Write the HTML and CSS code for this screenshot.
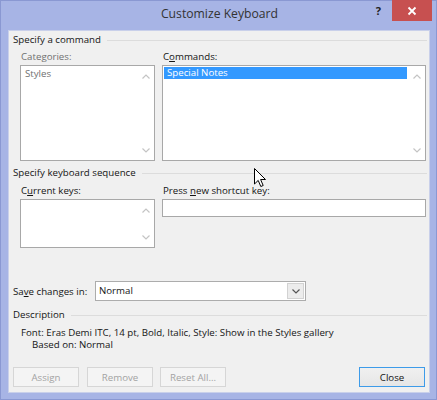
FILE: index.html
```html
<!DOCTYPE html>
<html>
<head>
<meta charset="utf-8">
<link rel="stylesheet" href="styles.css">
</head>
<body>
<div class="window">
  <div class="titlebar">
    <div class="title">Customize Keyboard</div>
    <div class="controls">
      <span class="help">?</span>
      <span class="close"><svg width="10" height="10" viewBox="0 0 10 10"><path d="M1.5 1.5 L8.5 8.5 M8.5 1.5 L1.5 8.5" stroke="#fff" stroke-width="1.8"/></svg></span>
    </div>
  </div>
  <div class="client">
    <div class="group-title">Specify a command</div>
    <div class="cols cmd-cols">
      <div class="col left">
        <div class="label disabled">Categories:</div>
        <div class="listbox tall">
          <div class="items"><div class="item gray">Styles</div></div>
          <div class="scroll">
            <svg width="8" height="5" viewBox="0 0 8 5"><path d="M0.5 4.5 L4 1 L7.5 4.5" fill="none" stroke="#c4c4c4" stroke-width="1.2"/></svg>
            <svg width="8" height="5" viewBox="0 0 8 5"><path d="M0.5 0.5 L4 4 L7.5 0.5" fill="none" stroke="#c4c4c4" stroke-width="1.2"/></svg>
          </div>
        </div>
      </div>
      <div class="col right">
        <div class="label">C<u>o</u>mmands:</div>
        <div class="listbox tall">
          <div class="items"><div class="item selected">Special Notes</div></div>
          <div class="scroll">
            <svg width="8" height="5" viewBox="0 0 8 5"><path d="M0.5 4.5 L4 1 L7.5 4.5" fill="none" stroke="#c4c4c4" stroke-width="1.2"/></svg>
            <svg width="8" height="5" viewBox="0 0 8 5"><path d="M0.5 0.5 L4 4 L7.5 0.5" fill="none" stroke="#c4c4c4" stroke-width="1.2"/></svg>
          </div>
        </div>
      </div>
    </div>
    <div class="group-title g2">Specify keyboard sequence</div>
    <div class="cols keys-cols">
      <div class="col left">
        <div class="label">C<u>u</u>rrent keys:</div>
        <div class="listbox short">
          <div class="items"></div>
          <div class="scroll">
            <svg width="8" height="5" viewBox="0 0 8 5"><path d="M0.5 4.5 L4 1 L7.5 4.5" fill="none" stroke="#c4c4c4" stroke-width="1.2"/></svg>
            <svg width="8" height="5" viewBox="0 0 8 5"><path d="M0.5 0.5 L4 4 L7.5 0.5" fill="none" stroke="#c4c4c4" stroke-width="1.2"/></svg>
          </div>
        </div>
      </div>
      <div class="col right">
        <div class="label">Press <u>n</u>ew shortcut key:</div>
        <div class="textbox"></div>
      </div>
    </div>
    <div class="save-row">
      <span class="save-label">Sa<u>v</u>e changes in:</span>
      <div class="select">
        <span class="select-value">Normal</span>
        <span class="drop"><svg width="8" height="5" viewBox="0 0 8 5"><path d="M0.5 0.5 L4 4 L7.5 0.5" fill="none" stroke="#555" stroke-width="1.2"/></svg></span>
      </div>
    </div>
    <div class="group-title g3">Description</div>
    <div class="desc">
      <div>Font: Eras Demi ITC, 14 pt, Bold, Italic, Style: Show in the Styles gallery</div>
      <div class="based">Based on: Normal</div>
    </div>
    <div class="buttons">
      <button class="btn" disabled>Assign</button>
      <button class="btn" disabled>Remove</button>
      <button class="btn" disabled>Reset All...</button>
      <span class="spacer"></span>
      <button class="btn primary">Close</button>
    </div>
  </div>
  <svg class="cursor" width="13" height="20" viewBox="0 0 13 20"><path d="M0.5 0.5 L0.5 16 L4.2 12.4 L6.8 18.5 L9.2 17.5 L6.6 11.5 L11.5 11.5 Z" fill="#fff" stroke="#000" stroke-width="1" stroke-linejoin="miter"/></svg>
</div>
</body>
</html>
```
FILE: styles.css
```css
* { box-sizing: border-box; }
html, body { margin: 0; padding: 0; }
body {
  background: #a7b4e5;
  font-family: "Open Sans", "Noto Sans", sans-serif;
  font-size: 9.7px;
  color: #141414;
}
.window {
  position: relative;
  width: 437px;
  height: 400px;
  background: #a7b4e5;
  border: 1px solid #8a98d2;
}
.titlebar {
  position: relative;
  height: 29px;
}
.title {
  text-align: center;
  font-size: 12.2px;
  line-height: 26px;
  color: #333;
  padding-left: 2px;
}
.controls {
  position: absolute;
  top: -1px;
  right: 4px;
  display: flex;
  align-items: flex-start;
}
.help {
  font-size: 11px;
  font-weight: bold;
  color: #222;
  line-height: 22px;
  margin-right: 11px;
}
.close {
  width: 40px;
  height: 21px;
  background: #c75050;
  display: flex;
  align-items: center;
  justify-content: center;
}
.client {
  position: relative;
  margin-left: 7px;
  width: 422px;
  height: 363px;
  background: #f0f0f0;
  border: 1px solid #c9d0ea;
  padding: 2px 2px 0 4px;
}
.group-title {
  display: flex;
  align-items: center;
  gap: 6px;
  height: 14px;
  line-height: 14px;
}
.group-title::after {
  content: "";
  flex: 1;
  height: 1px;
  background: #dcdcdc;
}
.g2 { margin-top: 5px; }
.g3 { margin-top: 7px; }
.cols {
  display: flex;
  gap: 7px;
  margin-left: 7px;
}
.cmd-cols { margin-top: 3px; }
.keys-cols { margin-top: 4px; }
.col.left { width: 135px; }
.col.right { width: 264px; }
.label {
  line-height: 14px;
  height: 14px;
  padding-left: 1px;
  margin-bottom: 1px;
}
.label.disabled { color: #707070; }
u { text-decoration-thickness: 1px; text-underline-offset: 1px; }
.listbox {
  display: flex;
  background: #fff;
  border: 1px solid #a8a8a8;
}
.listbox.tall { height: 96px; }
.listbox.short { height: 49px; }
.items {
  flex: 1;
  padding: 1px;
}
.item {
  height: 12px;
  line-height: 12px;
  padding-left: 3px;
}
.item.gray { color: #707070; padding-top: 1px; height: 13px; }
.item.selected {
  background: #3399ff;
  color: #fff;
}
.scroll {
  width: 17px;
  display: flex;
  flex-direction: column;
  justify-content: space-between;
  align-items: center;
  padding: 8px 0 7px;
}
.textbox {
  height: 18px;
  background: #fff;
  border: 1px solid #a8a8a8;
}
.save-row {
  margin-top: 33px;
  display: flex;
  align-items: center;
  height: 20px;
}
.save-label {
  width: 82px;
}
.select {
  width: 211px;
  height: 20px;
  display: flex;
  background: #fff;
  border: 1px solid #acacac;
}
.select-value {
  flex: 1;
  line-height: 18px;
  padding-left: 3px;
}
.drop {
  width: 17px;
  margin: 1px;
  background: #ececec;
  border: 1px solid #d2d2d2;
  display: flex;
  align-items: center;
  justify-content: center;
}
.desc {
  margin-top: 5px;
  line-height: 12px;
  padding-left: 8px;
}
.based { padding-left: 11px; }
.buttons {
  margin-top: 16px;
  display: flex;
  height: 20px;
  padding-right: 2px;
}
.btn {
  width: 66px;
  height: 20px;
  font-family: inherit;
  font-size: 9.7px;
  margin: 0 8px 0 0;
  padding: 0;
  border: 1px solid #d6d6d6;
  background: #f4f4f4;
  color: #a3a3a3;
}
.btn:nth-child(2) { margin-right: 7px; }
.btn.primary {
  margin-right: 0;
  border: 1px solid #3d9be9;
  background: linear-gradient(#f0f0f0, #e6e6e6);
  color: #141414;
}
.spacer { flex: 1; }
.cursor {
  position: absolute;
  left: 253px;
  top: 167px;
}
```
